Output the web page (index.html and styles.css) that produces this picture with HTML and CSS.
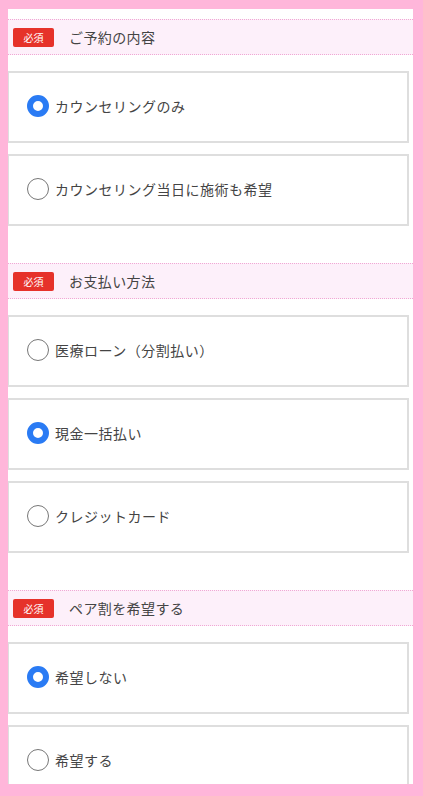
FILE: index.html
```html
<!DOCTYPE html>
<html lang="ja">
<head>
  <meta charset="UTF-8">
  <meta name="viewport" content="width=device-width, initial-scale=1.0">
  <title>ご予約フォーム</title>
  <link rel="stylesheet" href="styles.css">
</head>
<body>
  <div class="frame">
    <form class="form">
      <div class="group">
        <div class="heading"><span class="badge">必須</span><span class="heading-text">ご予約の内容</span></div>
        <label class="option"><input type="radio" name="plan" checked><span class="radio"></span>カウンセリングのみ</label>
        <label class="option"><input type="radio" name="plan"><span class="radio"></span>カウンセリング当日に施術も希望</label>
      </div>

      <div class="group">
        <div class="heading"><span class="badge">必須</span><span class="heading-text">お支払い方法</span></div>
        <label class="option"><input type="radio" name="pay"><span class="radio"></span>医療ローン（分割払い）</label>
        <label class="option"><input type="radio" name="pay" checked><span class="radio"></span>現金一括払い</label>
        <label class="option"><input type="radio" name="pay"><span class="radio"></span>クレジットカード</label>
      </div>

      <div class="group">
        <div class="heading"><span class="badge">必須</span><span class="heading-text">ペア割を希望する</span></div>
        <label class="option"><input type="radio" name="pair" checked><span class="radio"></span>希望しない</label>
        <label class="option"><input type="radio" name="pair"><span class="radio"></span>希望する</label>
      </div>
    </form>
  </div>
</body>
</html>
```

FILE: styles.css
```css
html, body {
  height: 100%;
}

body {
  margin: 0;
  padding: 9px 10px 12px 8px;
  box-sizing: border-box;
  background-color: #FFB6DA;
  font-family: "Noto Sans CJK JP", "Noto Sans", sans-serif;
  color: #444;
}

.frame {
  height: 100%;
  background-color: white;
  overflow: hidden;
}

.form {
  padding-top: 10px;
}

.group {
  margin-bottom: 37px;
}

.heading {
  display: flex;
  align-items: center;
  height: 36px;
  box-sizing: border-box;
  background-color: #FDF0FA;
  border-top: 1px dotted #F0A8D4;
  border-bottom: 1px dotted #F0A8D4;
  margin-bottom: 16px;
}

.badge {
  margin-left: 5px;
  width: 41px;
  height: 19px;
  line-height: 19px;
  text-align: center;
  background-color: #E6322A;
  color: white;
  font-size: 10px;
  border-radius: 2px;
}

.heading-text {
  margin-left: 15px;
  font-size: 14px;
  letter-spacing: 0.4px;
  color: #444;
}

.option {
  display: flex;
  align-items: center;
  height: 72px;
  box-sizing: border-box;
  margin-right: 4px;
  margin-bottom: 11px;
  padding-left: 18px;
  padding-bottom: 2px;
  border: 2px solid #DEDEDE;
  border-left-width: 1px;
  font-size: 14px;
  letter-spacing: 0.5px;
  color: #444;
  cursor: pointer;
}

.option:last-child {
  margin-bottom: 0;
}

.option input {
  display: none;
}

.radio {
  width: 22px;
  height: 22px;
  box-sizing: border-box;
  border: 1.6px solid #777;
  border-radius: 50%;
  margin-right: 6px;
  flex-shrink: 0;
}

.option input:checked + .radio {
  border: 6px solid #2A7BF4;
  background-color: white;
}
```
